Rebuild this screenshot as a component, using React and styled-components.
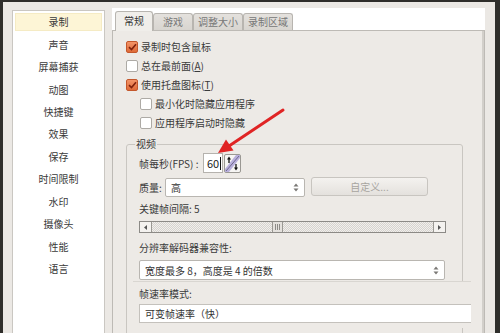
import React from 'react'
import styled, { createGlobalStyle } from 'styled-components'

const GlobalStyle = createGlobalStyle`
  html, body {
    margin: 0;
    padding: 0;
    background: #2f2e2b;
    overflow: hidden;
  }
  body {
    font-family: "Noto Sans CJK SC", "Noto Sans", sans-serif;
    font-size: 10px;
    color: #3a3a3a;
  }
`

const Root = styled.div`
  position: relative;
  width: 500px;
  height: 333px;
  box-sizing: border-box;
  padding: 2px 5px 0 3px;
`

const Window = styled.div`
  display: flex;
  gap: 7px;
  height: 331px;
  box-sizing: border-box;
  padding: 6px 10px 0 9px;
  background: #ebe8e4;
  overflow: hidden;
`

const Sidebar = styled.div`
  width: 93px;
  flex: none;
  box-sizing: border-box;
  margin-top: 2px;
  background: #fff;
  border: 1px solid #cac7c2;
  border-bottom: none;
`

const SideItem = styled.div`
  height: 22.45px;
  display: flex;
  align-items: center;
  padding: 0 2px;
`

const SideLabel = styled.div`
  flex: 1;
  height: 18px;
  line-height: 18px;
  text-align: center;
  color: #3a3a3a;
  background: ${p => (p.$active ? '#fdf5d6' : 'transparent')};
  box-shadow: ${p => (p.$active ? 'inset 0 0 0 1px #f5ebc4' : 'none')};
`

const Main = styled.div`
  flex: 1;
  display: flex;
  flex-direction: column;
  min-width: 0;
`

const TabBar = styled.div`
  height: 22px;
  flex: none;
  display: flex;
  align-items: flex-end;
  padding-left: 3px;
  background: #fff;
  position: relative;
  z-index: 1;
`

const Tab = styled.div`
  width: ${p => p.$w}px;
  box-sizing: border-box;
  height: ${p => (p.$active ? 20 : 17)}px;
  margin-bottom: ${p => (p.$active ? -1 : 0)}px;
  line-height: ${p => (p.$active ? 18 : 15)}px;
  text-align: center;
  border: 1px solid #b8b5b0;
  border-bottom: none;
  border-radius: 3px 3px 0 0;
  color: ${p => (p.$active ? '#333' : '#777')};
  background: ${p => (p.$active ? '#f0eeea' : 'linear-gradient(#e4e1dd, #d8d5d0)')};
`

const Pane = styled.div`
  flex: 1;
  box-sizing: border-box;
  padding: 6px 0 0 13px;
  background: #edeae6;
  border: 1px solid #bdbab5;
  border-bottom: none;
  box-shadow: inset -2px 0 0 #d2cfca;
`

const CheckRow = styled.div`
  display: flex;
  align-items: center;
  gap: 3px;
  height: 19px;
  padding-left: ${p => (p.$indent ? 14 : 0)}px;
`

const Box = styled.span`
  width: 12px;
  height: 12px;
  box-sizing: border-box;
  border-radius: 2px;
  display: flex;
  align-items: center;
  justify-content: center;
  border: 1px solid ${p => (p.$checked ? '#c4572b' : '#adaaa5')};
  background: ${p => (p.$checked ? 'linear-gradient(#f39467, #de6a38)' : '#fff')};
`

const Group = styled.fieldset`
  margin: 5px 21px 0 0;
  padding: 0 16px 0 12px;
  height: 230px;
  min-width: 0;
  border: 1px solid #c9c6c1;
  border-radius: 3px;
`

const Legend = styled.legend`
  padding: 0 1px;
  margin-left: -4px;
  line-height: 14px;
`

const FieldRow = styled.div`
  display: flex;
  align-items: center;
  height: 20px;
  margin-top: ${p => p.$mt || 0}px;
`

const FieldLabel = styled.span`
  width: ${p => p.$w}px;
  flex: none;
  white-space: nowrap;
`

const NumInput = styled.div`
  width: 20px;
  height: 20px;
  flex: none;
  box-sizing: border-box;
  border: 1px solid #b5b2ad;
  background: #fff;
  display: flex;
  align-items: center;
  padding-left: 3px;
  font-size: 11px;
  color: #222;
`

const Caret = styled.span`
  width: 1px;
  height: 13px;
  background: #111;
  margin-left: 1px;
`

const Select = styled.div`
  width: ${p => p.$w}px;
  height: ${p => p.$h || 20}px;
  flex: none;
  box-sizing: border-box;
  align-self: ${p => p.$align || 'auto'};
  display: flex;
  align-items: center;
  justify-content: space-between;
  padding: 0 5px 0 5px;
  border: 1px solid #b9b6b1;
  border-radius: 2px;
  background: #fff;
  color: #333;
  margin-top: ${p => p.$mt || 0}px;
`

const Button = styled.div`
  width: 117px;
  height: 19px;
  flex: none;
  box-sizing: border-box;
  margin-left: 6px;
  align-self: flex-start;
  border: 1px solid #c8c5c0;
  border-radius: 3px;
  background: linear-gradient(#f4f2ef, #e4e1dd);
  color: #a7a49f;
  text-align: center;
  line-height: 17px;
`

const Caption = styled.div`
  line-height: 14px;
  white-space: nowrap;
  margin-top: ${p => p.$mt || 0}px;
`

const Scroll = styled.div`
  margin-top: 5px;
  height: 12px;
  box-sizing: border-box;
  display: flex;
  border: 1px solid #8c8a86;
  background: repeating-conic-gradient(#d6d3cf 0 25%, #f1efec 0 50%) 0 0 / 2px 2px;
`

const ScrollBtn = styled.div`
  width: 11px;
  flex: none;
  display: flex;
  align-items: center;
  justify-content: center;
  background: #f4f2ef;
  border-${p => p.$side}: 1px solid #9a9893;
`

const Gap = styled.div`
  flex: ${p => p.$grow};
`

const Thumb = styled.div`
  width: 11px;
  flex: none;
  box-sizing: border-box;
  border-left: 1px solid #9a9893;
  border-right: 1px solid #9a9893;
  background: #e4e1dd;
  display: flex;
  align-items: center;
  justify-content: center;
  gap: 1px;
`

const Grip = styled.span`
  width: 1px;
  height: 6px;
  background: #8d8b87;
`

const Panel = styled.div`
  margin: 1px -25px 0 -6px;
  padding: 5px 0 5px 6px;
  background: #edeae6;
  border-top: 1px solid #d9d6d1;
  position: relative;
`

const WideBox = styled.div`
  margin-top: 3px;
  height: 19px;
  box-sizing: border-box;
  border: 1px solid #c4c1bc;
  border-right: none;
  background: #fff;
  padding-left: 5px;
  line-height: 17px;
  color: #333;
`

const ArrowLayer = styled.svg`
  position: absolute;
  left: 0;
  top: 0;
  pointer-events: none;
`

const Check = () => (
  <svg width="9" height="8" viewBox="0 0 9 8">
    <path d="M1 4.2 L3.5 6.6 L8 1.2" fill="none" stroke="#7e210c" strokeWidth="1.6" />
  </svg>
)

const CheckItem = ({ checked, indent, children }) => (
  <CheckRow $indent={indent}>
    <Box $checked={checked}>{checked && <Check />}</Box>
    <span>{children}</span>
  </CheckRow>
)

const SpinArrows = () => (
  <svg width="6" height="9" viewBox="0 0 6 9">
    <path d="M3 0.5 L5.5 3.5 L0.5 3.5 Z M3 8.5 L5.5 5.5 L0.5 5.5 Z" fill="#7a7875" />
  </svg>
)

const FpsSpin = () => (
  <svg width="17" height="19" viewBox="0 0 17 19" style={{ marginLeft: 1, flex: 'none' }}>
    <rect x="0.5" y="0.5" width="16" height="18" rx="1.5" fill="#f6f5f3" stroke="#9a9893" />
    <polygon points="12,1 16,1 16,4 5,18 1,18 1,15" fill="#b9b0dc" />
    <line x1="2" y1="17" x2="15" y2="2" stroke="#5a5577" strokeWidth="0.8" />
    <path d="M5 9 L5 4" stroke="#111" strokeWidth="1.3" />
    <path d="M3 5.5 L5 2.5 L7 5.5 Z" fill="#111" />
    <path d="M12 10 L12 15" stroke="#111" strokeWidth="1.3" />
    <path d="M10 13.5 L12 16.5 L14 13.5 Z" fill="#111" />
  </svg>
)

const sideItems = ['录制', '声音', '屏幕捕获', '动图', '快捷键', '效果', '保存', '时间限制', '水印', '摄像头', '性能', '语言']
const tabs = [['常规', 38], ['游戏', 40], ['调整大小', 50], ['录制区域', 50]]

export default function App () {
  return (
    <Root>
      <GlobalStyle />
      <Window>
        <Sidebar>
          {sideItems.map((name, i) => (
            <SideItem key={name}>
              <SideLabel $active={i === 0}>{name}</SideLabel>
            </SideItem>
          ))}
        </Sidebar>
        <Main>
          <TabBar>
            {tabs.map(([t, w], i) => (
              <Tab key={t} $w={w} $active={i === 0}>{t}</Tab>
            ))}
          </TabBar>
          <Pane>
            <CheckItem checked>录制时包含鼠标</CheckItem>
            <CheckItem>总在最前面(<u>A</u>)</CheckItem>
            <CheckItem checked>使用托盘图标(<u>T</u>)</CheckItem>
            <CheckItem indent>最小化时隐藏应用程序</CheckItem>
            <CheckItem indent>应用程序启动时隐藏</CheckItem>
            <Group>
              <Legend>视频</Legend>
              <FieldRow $mt={2}>
                <FieldLabel $w={64}>帧每秒(FPS) :</FieldLabel>
                <NumInput>60<Caret /></NumInput>
                <FpsSpin />
              </FieldRow>
              <FieldRow $mt={4}>
                <FieldLabel $w={26}>质量:</FieldLabel>
                <Select $w={140} $h={19} $align="flex-end">
                  <span>高</span>
                  <SpinArrows />
                </Select>
                <Button>自定义...</Button>
              </FieldRow>
              <Caption $mt={5}>关键帧间隔: 5</Caption>
              <Scroll>
                <ScrollBtn $side="right">
                  <svg width="3" height="5" viewBox="0 0 3 5"><path d="M3 0 L0 2.5 L3 5 Z" fill="#555" /></svg>
                </ScrollBtn>
                <Gap $grow={120} />
                <Thumb><Grip /><Grip /><Grip /></Thumb>
                <Gap $grow={151} />
                <ScrollBtn $side="left">
                  <svg width="3" height="5" viewBox="0 0 3 5"><path d="M0 0 L3 2.5 L0 5 Z" fill="#555" /></svg>
                </ScrollBtn>
              </Scroll>
              <Caption $mt={8}>分辨率解码器兼容性:</Caption>
              <Select $w={306} $mt={5}>
                <span>宽度最多 8，高度是 4 的倍数</span>
                <SpinArrows />
              </Select>
              <Panel>
                <Caption>帧速率模式:</Caption>
                <WideBox>可变帧速率（快）</WideBox>
              </Panel>
            </Group>
          </Pane>
        </Main>
      </Window>
      <ArrowLayer width="500" height="333" viewBox="0 0 500 333">
        <line x1="283" y1="110" x2="229" y2="146" stroke="#e02424" strokeWidth="3" strokeLinecap="round" />
        <polygon points="218,153 233.5,150.5 226,139.5" fill="#e02424" />
      </ArrowLayer>
    </Root>
  )
}
